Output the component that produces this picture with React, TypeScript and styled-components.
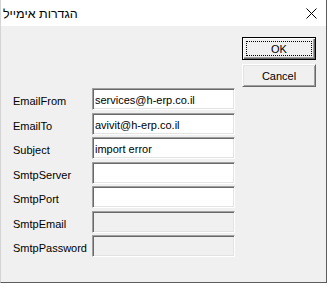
import styled, { createGlobalStyle } from "styled-components";

const GlobalStyle = createGlobalStyle`
  html, body {
    margin: 0;
    padding: 0;
    background: #ffffff;
  }
  body {
    font-family: "Liberation Sans", Arial, sans-serif;
  }
`;

const Window = styled.div`
  width: 327px;
  height: 283px;
  box-sizing: border-box;
  display: flex;
  flex-direction: column;
  background: #f0f0f0;
  border-right: 1px solid #5c5c5c;
  border-bottom: 1px solid #5c5c5c;
  border-left: 1px solid #d4d4d4;
`;

const TitleBar = styled.div`
  height: 26px;
  flex: none;
  background: #ffffff;
  display: flex;
  align-items: center;
  justify-content: space-between;
  padding: 0 9px 0 2px;
`;

const Title = styled.span`
  direction: rtl;
  font-family: "Liberation Sans", "DejaVu Sans", sans-serif;
  font-size: 12.5px;
  color: #000;
  padding-top: 1px;
`;

const CloseIcon = styled.svg`
  width: 11px;
  height: 11px;
  display: block;
`;

const Body = styled.div`
  flex: 1;
  display: flex;
  align-items: flex-start;
  padding: 11px 0 0 12px;
`;

const Form = styled.div`
  margin-top: 51px;
  width: 223px;
  display: flex;
  flex-direction: column;
  gap: 2.5px;
`;

const Row = styled.div`
  display: flex;
  height: 22px;
`;

const Label = styled.div`
  width: 79px;
  flex: none;
  font-size: 11px;
  line-height: 13px;
  padding-top: 7px;
  color: #000;
`;

const Field = styled.input<{ $disabled?: boolean }>`
  width: 143px;
  height: 22px;
  box-sizing: border-box;
  margin: 0;
  padding: 2px 2px 0;
  font-family: "Liberation Sans", Arial, sans-serif;
  font-size: 11px;
  color: #000;
  background: ${(p) => (p.$disabled ? "#f0f0f0" : "#ffffff")};
  border: 1px solid;
  border-color: #a0a0a0 #ffffff #ffffff #a0a0a0;
  box-shadow: inset 1px 1px 0 #696969, inset -1px -1px 0 #e3e3e3;
  outline: none;
`;

const Buttons = styled.div`
  margin-left: 6px;
  display: flex;
  flex-direction: column;
  gap: 4px;
`;

const Button = styled.button<{ $default?: boolean }>`
  position: relative;
  width: 74px;
  height: 23px;
  box-sizing: border-box;
  margin: 0;
  padding: 0;
  font-family: "Liberation Sans", Arial, sans-serif;
  font-size: 11px;
  color: #000;
  background: #f0f0f0;
  border: 1px solid;
  border-color: ${(p) =>
    p.$default ? "#000" : "#ffffff #696969 #696969 #ffffff"};
  box-shadow: ${(p) =>
    p.$default
      ? "inset 1px 1px 0 #ffffff, inset -1px -1px 0 #696969, inset -2px -2px 0 #a0a0a0"
      : "inset 1px 1px 0 #e3e3e3, inset -1px -1px 0 #a0a0a0"};
`;

const Focus = styled.span`
  position: absolute;
  inset: 3px;
  border: 1px dotted #000;
`;

const fields = [
  { label: "EmailFrom", value: "services@h-erp.co.il" },
  { label: "EmailTo", value: "avivit@h-erp.co.il" },
  { label: "Subject", value: "import error" },
  { label: "SmtpServer", value: "" },
  { label: "SmtpPort", value: "" },
  { label: "SmtpEmail", value: "", disabled: true },
  { label: "SmtpPassword", value: "", disabled: true },
];

export default function App() {
  return (
    <>
      <GlobalStyle />
      <Window>
        <TitleBar>
          <Title>הגדרות אימייל</Title>
          <CloseIcon viewBox="0 0 11 11">
            <path d="M0.5 0.5 L10.5 10.5 M10.5 0.5 L0.5 10.5" stroke="#000" strokeWidth="1" />
          </CloseIcon>
        </TitleBar>
        <Body>
          <Form>
            {fields.map((f) => (
              <Row key={f.label}>
                <Label>{f.label}</Label>
                <Field
                  defaultValue={f.value}
                  readOnly
                  $disabled={f.disabled}
                />
              </Row>
            ))}
          </Form>
          <Buttons>
            <Button $default>
              <Focus />
              OK
            </Button>
            <Button>Cancel</Button>
          </Buttons>
        </Body>
      </Window>
    </>
  );
}
